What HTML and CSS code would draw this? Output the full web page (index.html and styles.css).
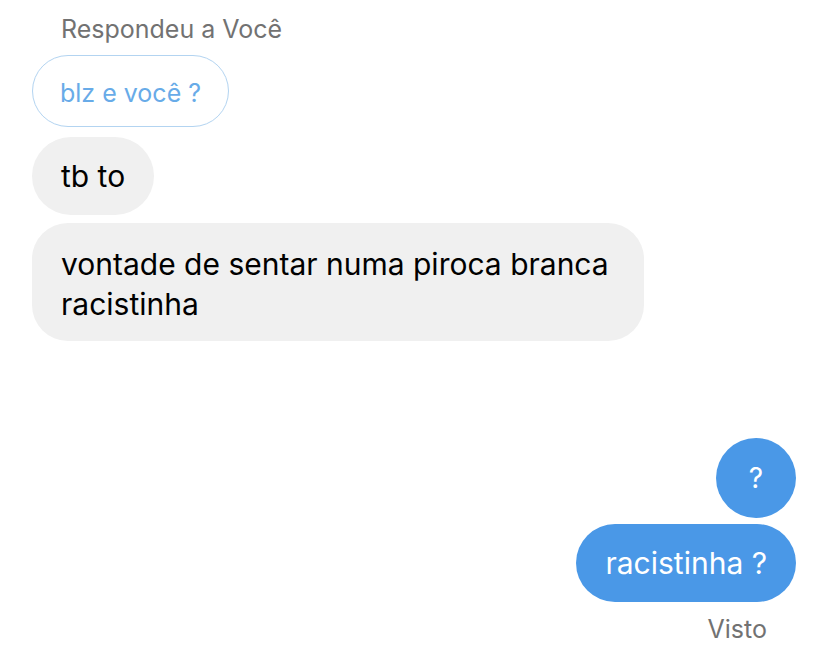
FILE: index.html
```html
<!DOCTYPE html>
<html lang="pt">
<head>
<meta charset="utf-8">
<link rel="stylesheet" href="styles.css">
</head>
<body>
<div class="chat">
  <div class="label">Respondeu a Você</div>
  <div class="reply">blz e você ?</div>
  <div class="bubble in">tb to</div>
  <div class="bubble in multi">vontade de sentar numa piroca branca racistinha</div>
  <div class="bubble out circle">?</div>
  <div class="bubble out">racistinha ?</div>
  <div class="seen">Visto</div>
</div>
</body>
</html>
```
FILE: styles.css
```css
html, body {
  margin: 0;
  padding: 0;
  background: #ffffff;
}
body {
  font-family: "Inter", "Noto Sans", sans-serif;
  width: 828px;
  height: 668px;
  overflow: hidden;
}
.chat {
  display: flex;
  flex-direction: column;
  padding: 14px 32px 0 32px;
}
.label {
  margin-left: 29px;
  font-size: 25px;
  line-height: 30px;
  color: #727272;
}
.reply {
  align-self: flex-start;
  margin-top: 11px;
  box-sizing: border-box;
  height: 72px;
  display: flex;
  align-items: center;
  padding: 3px 27px 0 27px;
  border: 1.5px solid #b3d4f1;
  border-radius: 36px;
  font-size: 25px;
  color: #68abe8;
}
.bubble {
  align-self: flex-start;
  box-sizing: border-box;
  min-height: 78px;
  display: flex;
  align-items: center;
  padding: 1px 29px 0 29px;
  border-radius: 39px;
  font-size: 30px;
  line-height: 39px;
}
.in {
  background: #f0f0f0;
  color: #000000;
}
.reply + .in {
  margin-top: 10px;
}
.in + .in {
  margin-top: 8px;
}
.multi {
  width: 612px;
  padding: 21px 29px 17px 29px;
  line-height: 40px;
  border-radius: 36px;
}
.out {
  align-self: flex-end;
  background: #4a98e7;
  color: #ffffff;
  margin-top: 6px;
}
.circle {
  margin-top: 97px;
  width: 80px;
  height: 80px;
  min-height: 80px;
  padding: 0;
  justify-content: center;
  border-radius: 50%;
  font-size: 28px;
}
.seen {
  align-self: flex-end;
  margin-right: 29px;
  margin-top: 12px;
  font-size: 25px;
  line-height: 30px;
  color: #727272;
}
```
